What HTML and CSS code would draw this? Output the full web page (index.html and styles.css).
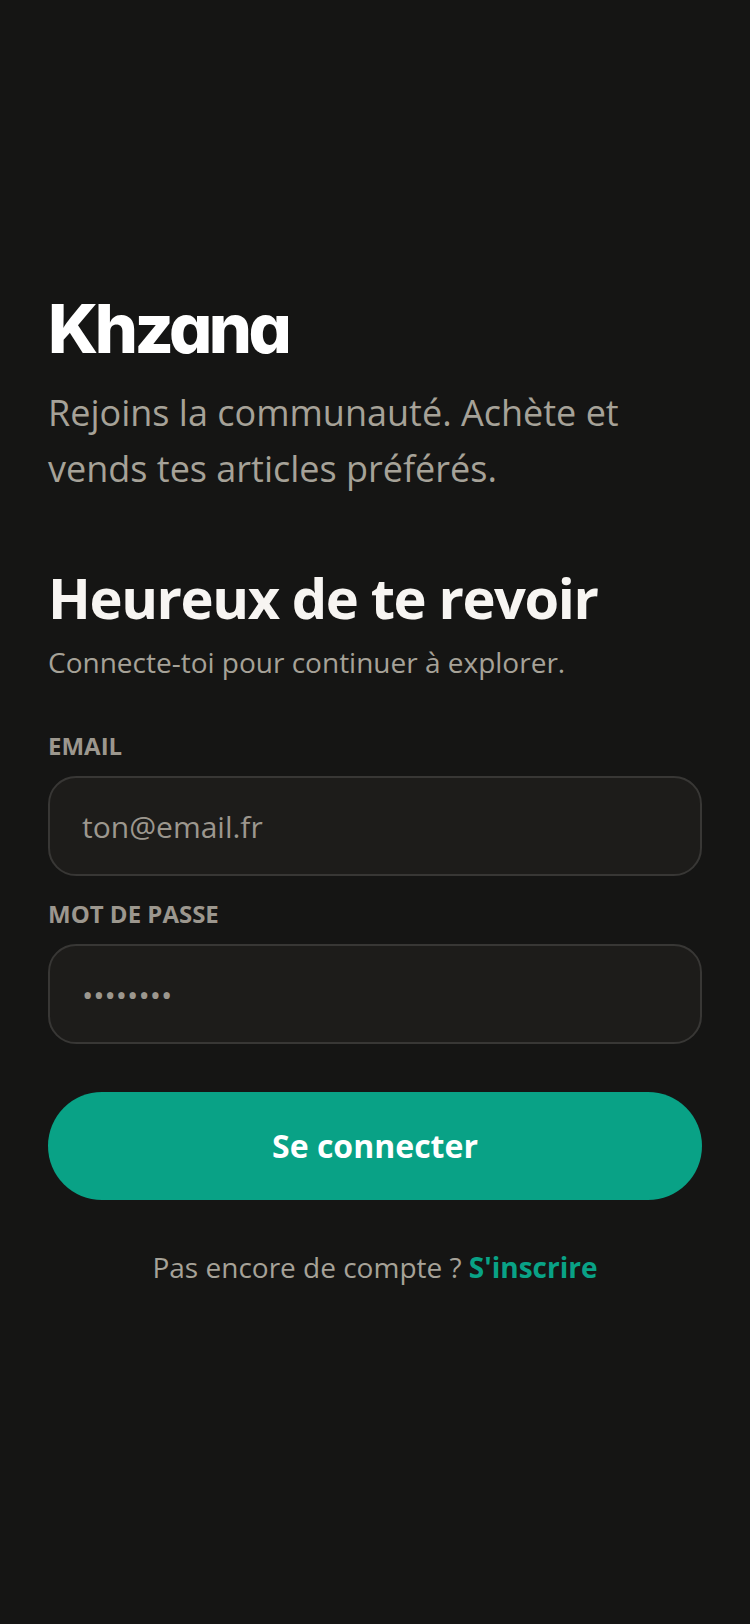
FILE: index.html
```html
<!DOCTYPE html>
<html lang="fr">
<head>
<meta charset="utf-8">
<title>Khzana</title>
<link rel="stylesheet" href="styles.css">
</head>
<body>
<main class="screen">
  <h1 class="logo">Khzana</h1>
  <p class="tagline">Rejoins la communauté. Achète et vends tes articles préférés.</p>
  <h2 class="title">Heureux de te revoir</h2>
  <p class="subtitle">Connecte-toi pour continuer à explorer.</p>
  <form class="form">
    <div class="field">
      <label class="label">EMAIL</label>
      <div class="input">ton@email.fr</div>
    </div>
    <div class="field">
      <label class="label">MOT DE PASSE</label>
      <div class="input dots">••••••••</div>
    </div>
    <div class="button">Se connecter</div>
  </form>
  <p class="signup">Pas encore de compte ? <a class="link">S'inscrire</a></p>
</main>
</body>
</html>
```

FILE: styles.css
```css
* { box-sizing: border-box; margin: 0; padding: 0; }
html, body { background: #151514; }
body { width: 750px; height: 1624px; font-family: "Open Sans", "Noto Sans", sans-serif; overflow: hidden; }
.screen { display: flex; flex-direction: column; padding: 284px 48px 0; }
.logo { font-family: Inter, "Noto Sans", sans-serif; font-feature-settings: "cv11" 1; font-size: 68px; line-height: 88px; font-weight: 800; color: #fff; letter-spacing: -3.5px; }
.tagline { font-size: 36px; line-height: 56px; color: #a6a298; margin-top: 13px; }
.title { font-size: 56px; line-height: 70px; font-weight: 700; color: #f7f5f2; margin-top: 65px; letter-spacing: -1.4px; }
.subtitle { font-size: 28px; line-height: 40px; color: #a6a298; margin-top: 10px; }
.form { display: flex; flex-direction: column; margin-top: 48px; }
.field { display: flex; flex-direction: column; gap: 14px; margin-bottom: 22px; }
.label { font-size: 24px; line-height: 32px; font-weight: 700; color: #9c978e; }
.input { height: 100px; border: 2px solid #383735; border-radius: 28px; background: #1d1c1a; padding: 0 32px; display: flex; align-items: center; font-size: 30px; color: #9c978e; }
.button { height: 108px; margin-top: 26px; padding-bottom: 2px; border-radius: 54px; background: #09a286; color: #fff; font-size: 32px; font-weight: 700; display: flex; align-items: center; justify-content: center; }
.signup { font-size: 28px; line-height: 40px; color: #a6a298; text-align: center; margin-top: 47px; }
.link { color: #09a286; font-weight: 700; }
```
